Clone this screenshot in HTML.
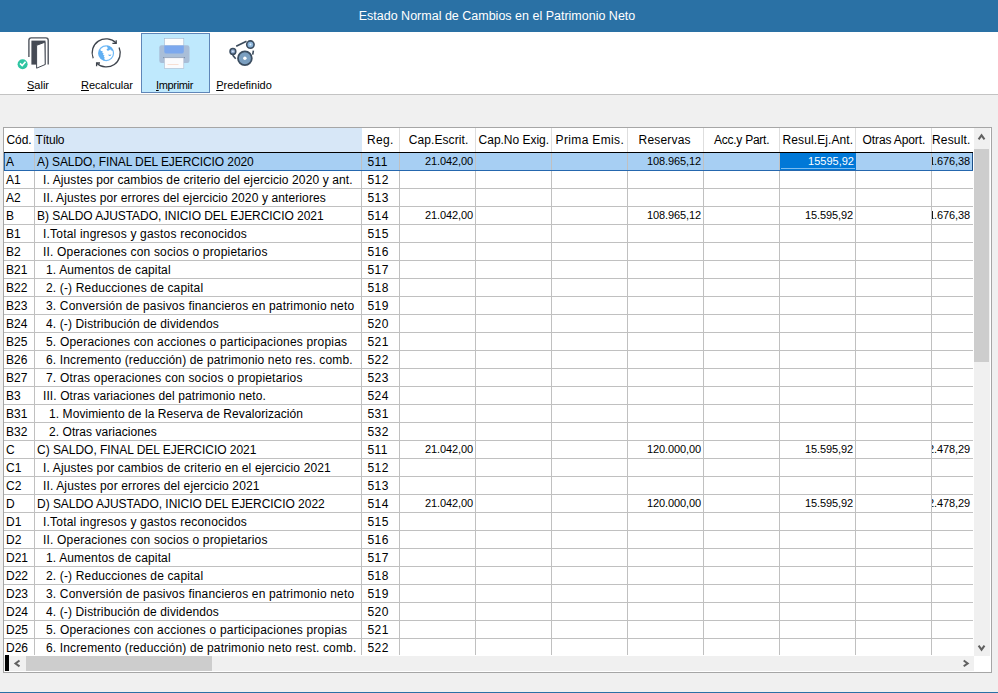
<!DOCTYPE html>
<html><head><meta charset="utf-8">
<style>
*{box-sizing:border-box;margin:0;padding:0}
html,body{width:998px;height:693px;overflow:hidden;background:#f0f0f0;font-family:"Liberation Sans",sans-serif;color:#000}
#title{position:absolute;left:0;top:0;width:998px;height:32px;background:#2a71a5;color:#fff;font-size:12.5px;line-height:33px;text-align:center;padding-right:4px}
#tb{position:absolute;left:0;top:32px;width:998px;height:63px;background:#fff;border-bottom:1px solid #c3c3c3}
.btn{position:absolute;top:1px;height:60px;font-size:11px;text-align:center}
.btn .lbl{position:absolute;left:0;right:0;top:46px;line-height:13px}
.btn svg{position:absolute;top:0;left:0}
#b3{background:#bfe9fd;border:1px solid #5f86b8}
#b3 .lbl{top:45px;letter-spacing:-0.35px;left:-2px}
u{text-decoration:underline}
#grid{position:absolute;left:3px;top:127px;width:989px;height:546px;border:1px solid #a6a6a6;background:#fff}
#inner{position:absolute;left:0px;top:0px;width:969px;height:527px;overflow:hidden;background:#fff}
#hdr{position:absolute;left:0;top:0;width:969px;height:25px;font-size:12px;line-height:25px;border-bottom:1px solid #000}
#hdr div{position:absolute;top:0;height:24px;text-align:left;white-space:nowrap;overflow:hidden}
#rows{position:absolute;left:0;top:25px;width:969px}
.row{position:relative;height:18px;width:969px;border-bottom:1px solid #c0c0c0}
.row.sel{background:#a7cff3;border-bottom:1px solid #2567ae;box-shadow:inset 1px 0 0 #2567ae,inset -1px 0 0 #1c4f88}
.c{position:absolute;top:0;height:17px;line-height:17px;font-size:12px;white-space:pre;overflow:hidden;border-right:1px solid #c0c0c0}
.n{font-size:11px;text-align:right;padding-right:2px;direction:rtl;letter-spacing:-0.1px}
.c0{left:0;width:31px;padding-left:2px;padding-top:1px}
.c1{left:31px;width:327px;padding-left:2px;padding-top:1px}
.c2{left:358px;width:38px;padding-left:5.5px;padding-top:1px;letter-spacing:0.4px}
.c3{left:396px;width:76px}
.c4{left:472px;width:76px}
.c5{left:548px;width:76px}
.c6{left:624px;width:76px}
.c7{left:700px;width:76px}
.c8{left:776px;width:76px}
.row.sel .c8{overflow:visible;border-right:none;width:77px;z-index:2}
.c9{left:852px;width:76px}
.c10{left:928px;width:41px;border-right:none;padding-right:3px}
.stem{position:absolute;left:0;top:4px;width:1px;height:8px;background:#1a1a1a}
.edit{position:absolute;left:0;top:0;width:76px;height:17px;background:#0078d7;color:#fff;text-align:right;padding-right:2px;direction:ltr;letter-spacing:0}
.edit::after{content:'';position:absolute;left:1px;right:1px;bottom:1px;height:1px;background:#7cbcf0}
#vs{position:absolute;left:970px;top:0;width:16px;height:528px;background:#f0f0f0}
#vs .th{position:absolute;left:0;top:21px;width:15px;height:213px;background:#cdcdcd}
#hs{position:absolute;left:0;top:528px;width:970px;height:15px;background:#f0f0f0}
#hs .th{position:absolute;left:22px;top:0;width:186px;height:15px;background:#cdcdcd}
#hs .blk{position:absolute;left:1px;top:-1px;width:4px;height:16px;background:#000}
#bot{position:absolute;left:0;top:692px;width:998px;height:1px;background:#2a71a5}
</style></head><body>
<div id="title">Estado Normal de Cambios en el Patrimonio Neto</div>
<div id="tb">
 <div class="btn" id="b1" style="left:4px;width:68px"><div class="lbl"><u>S</u>alir</div></div>
 <div class="btn" id="b2" style="left:73px;width:68px"><div class="lbl"><u>R</u>ecalcular</div></div>
 <div class="btn" id="b3" style="left:141px;width:69px"><div class="lbl"><u>I</u>mprimir</div></div>
 <div class="btn" id="b4" style="left:210px;width:68px"><div class="lbl"><u>P</u>redefinido</div></div>
</div>
<svg id="icons" width="998" height="693" viewBox="0 0 998 693" style="position:absolute;left:0;top:0;z-index:5;pointer-events:none">
 <!-- door -->
 <path d="M28.9 57 V40.2 Q28.9 37.9 31.2 37.9 H45.9 Q48.2 37.9 48.2 40.2 V64.6" fill="none" stroke="#50555e" stroke-width="1.4"/>
 <rect x="31.4" y="40.6" width="14.1" height="24" fill="#454a54"/>
 <path d="M44.9 42.2 L36.6 45.3 V68.2 L45.2 64.5 Z" fill="#fff" stroke="#454a54" stroke-width="1"/>
 <circle cx="22.6" cy="64.2" r="5" fill="#2fc5a2"/>
 <path d="M20 63.4 L22.2 65.5 L25.5 61.8" fill="none" stroke="#fff" stroke-width="1.6"/>
 <!-- recalc -->
 <g fill="none" stroke="#3e444d" stroke-width="1.3">
  <path d="M93.2 58.2 A14 14 0 0 1 116.1 43"/>
  <path d="M116.2 40.3 V43.4 H112.4"/>
  <path d="M119.1 47.4 A14 14 0 0 1 96.7 63.2"/>
  <path d="M96.6 66.2 V63 H100"/>
 </g>
 <defs><clipPath id="gc"><circle cx="106.1" cy="53.2" r="7.6"/></clipPath></defs>
 <circle cx="106.1" cy="53.2" r="7.4" fill="#fff" stroke="#6fb9f6" stroke-width="1.2"/>
 <g clip-path="url(#gc)" fill="#62b0f3">
  <path d="M97 49.3 L99.9 49.8 L101.3 51.1 L102.7 51.3 L102.3 52.8 L103.7 53.4 L103 54.8 L104.5 55.6 L103.7 57 L105 57.8 L104.1 58.8 L105.1 60.2 L104.6 62 H97 Z"/>
  <path d="M107.2 44 H115 V53 L113.4 52 L112.4 50.6 L111 50.6 L110.3 49.2 L109 50.4 L107.6 50.8 L106.5 49.6 L107.9 48.2 L107 46.8 Z"/>
  <path d="M108.2 54.2 Q109.8 55.6 111.4 54 L110.9 55.4 Q109.7 56.4 108.6 55.4 Z"/>
 </g>
 <!-- printer -->
 <rect x="164.3" y="38.3" width="19.5" height="8" fill="#fdfdfd" stroke="#9fb6cf" stroke-width="0.6"/>
 <rect x="159.3" y="45.3" width="30.2" height="17.6" rx="2.2" fill="#a9bed8"/>
 <path d="M164.3 45.5 H183.8 V51.4 Q183.8 53.6 181.6 53.6 H166.5 Q164.3 53.6 164.3 51.4 Z" fill="#7ca8ee"/>
 <rect x="163.2" y="57" width="21.8" height="1.2" fill="#7d8da6"/>
 <rect x="164.3" y="57.8" width="19.5" height="10.7" fill="#fbfbfd" stroke="#a9b9cf" stroke-width="0.6"/>
 <rect x="167.5" y="64" width="11" height="0.6" fill="#f5cdb8"/>
 <!-- predef -->
 <g stroke="#3b4a5b" stroke-width="1.6" fill="none">
  <path d="M236.2 46.3 L246.5 41.3"/>
  <path d="M232.6 54.9 L235.7 58.7"/>
  <path d="M253.4 50.6 L252.7 54.6"/>
 </g>
 <circle cx="244.9" cy="58.2" r="6.9" fill="#7b9fc0" stroke="#3b4d60" stroke-width="1.8"/>
 <circle cx="244.9" cy="58.2" r="1.7" fill="#fff"/>
 <circle cx="250.4" cy="44.6" r="3.7" fill="#8db5da" stroke="#3b4d60" stroke-width="1.6"/>
 <circle cx="250.4" cy="44.6" r="1" fill="#dff0ff"/>
 <circle cx="232.9" cy="51.4" r="2.9" fill="#8fa9cc" stroke="#3b4d60" stroke-width="1.5"/>
 <circle cx="232.9" cy="51.4" r="0.8" fill="#e4eefa"/>
 <g fill="none" stroke="#606060" stroke-width="2">
  <path d="M978.6 139.3 L981.55 135.3 L984.5 139.3"/>
  <path d="M978.6 645.7 L981.55 649.7 L984.5 645.7"/>
  <path d="M963.7 660.5 L967.7 663.4 L963.7 666.3"/>
  <path d="M19.5 660.5 L15.5 663.45 L19.5 666.4"/>
 </g>
</svg>
<div id="grid">
 <div id="inner">
  <div id="hdr">
   <div style="left:0px;width:30px;padding-left:2.50px;letter-spacing:-0.067px">Cód.</div>
   <div style="left:30px;width:328px;padding-left:1.60px;letter-spacing:-0.220px;background:#d7e7f7">Título</div>
   <div style="left:358px;width:38px;padding-left:5.00px;letter-spacing:0.367px;border-right:1px solid #dedede">Reg.</div>
   <div style="left:396px;width:76px;padding-left:8.70px;letter-spacing:0.090px;border-right:1px solid #dedede">Cap.Escrit.</div>
   <div style="left:472px;width:76px;padding-left:2.60px;letter-spacing:-0.018px;border-right:1px solid #dedede">Cap.No Exig.</div>
   <div style="left:548px;width:76px;padding-left:3.60px;letter-spacing:0.350px;border-right:1px solid #dedede">Prima Emis.</div>
   <div style="left:624px;width:76px;padding-left:10.60px;letter-spacing:0.186px;border-right:1px solid #dedede">Reservas</div>
   <div style="left:700px;width:76px;padding-left:10.00px;letter-spacing:-0.250px;border-right:1px solid #dedede">Acc.y Part.</div>
   <div style="left:776px;width:76px;padding-left:2.60px;letter-spacing:0.092px;border-right:1px solid #dedede">Resul.Ej.Ant.</div>
   <div style="left:852px;width:76px;padding-left:6.60px;letter-spacing:-0.127px;border-right:1px solid #dedede">Otras Aport.</div>
   <div style="left:928px;width:41px;padding-left:-0.20px;letter-spacing:0.167px">Result.</div>
  </div>
  <div id="rows">
<div class="row sel"><div class="c c0">A</div><div class="c c1" style="padding-left:2px;letter-spacing:-0.094px">A) SALDO, FINAL DEL EJERCICIO 2020</div><div class="c c2">511</div><div class="c n c3">21.042,00</div><div class="c n c4"></div><div class="c n c5"></div><div class="c n c6">108.965,12</div><div class="c n c7"></div><div class="c n c8"><div class="edit">15595,92</div></div><div class="c n c9"></div><div class="c n c10">1.676,38<i class="stem"></i></div></div>
<div class="row"><div class="c c0">A1</div><div class="c c1" style="padding-left:8px;letter-spacing:0.115px">I. Ajustes por cambios de criterio del ejercicio 2020 y ant.</div><div class="c c2">512</div><div class="c n c3"></div><div class="c n c4"></div><div class="c n c5"></div><div class="c n c6"></div><div class="c n c7"></div><div class="c n c8"></div><div class="c n c9"></div><div class="c n c10"></div></div>
<div class="row"><div class="c c0">A2</div><div class="c c1" style="padding-left:8px;letter-spacing:0.111px">II. Ajustes por errores del ejercicio 2020 y anteriores</div><div class="c c2">513</div><div class="c n c3"></div><div class="c n c4"></div><div class="c n c5"></div><div class="c n c6"></div><div class="c n c7"></div><div class="c n c8"></div><div class="c n c9"></div><div class="c n c10"></div></div>
<div class="row"><div class="c c0">B</div><div class="c c1" style="padding-left:2px;letter-spacing:-0.049px">B) SALDO AJUSTADO, INICIO DEL EJERCICIO 2021</div><div class="c c2">514</div><div class="c n c3">21.042,00</div><div class="c n c4"></div><div class="c n c5"></div><div class="c n c6">108.965,12</div><div class="c n c7"></div><div class="c n c8">15.595,92</div><div class="c n c9"></div><div class="c n c10">1.676,38<i class="stem"></i></div></div>
<div class="row"><div class="c c0">B1</div><div class="c c1" style="padding-left:8px;letter-spacing:0.197px">I.Total ingresos y gastos reconocidos</div><div class="c c2">515</div><div class="c n c3"></div><div class="c n c4"></div><div class="c n c5"></div><div class="c n c6"></div><div class="c n c7"></div><div class="c n c8"></div><div class="c n c9"></div><div class="c n c10"></div></div>
<div class="row"><div class="c c0">B2</div><div class="c c1" style="padding-left:8px;letter-spacing:0.175px">II. Operaciones con socios o propietarios</div><div class="c c2">516</div><div class="c n c3"></div><div class="c n c4"></div><div class="c n c5"></div><div class="c n c6"></div><div class="c n c7"></div><div class="c n c8"></div><div class="c n c9"></div><div class="c n c10"></div></div>
<div class="row"><div class="c c0">B21</div><div class="c c1" style="padding-left:11px;letter-spacing:0.152px">1. Aumentos de capital</div><div class="c c2">517</div><div class="c n c3"></div><div class="c n c4"></div><div class="c n c5"></div><div class="c n c6"></div><div class="c n c7"></div><div class="c n c8"></div><div class="c n c9"></div><div class="c n c10"></div></div>
<div class="row"><div class="c c0">B22</div><div class="c c1" style="padding-left:11px;letter-spacing:0.154px">2. (-) Reducciones de capital</div><div class="c c2">518</div><div class="c n c3"></div><div class="c n c4"></div><div class="c n c5"></div><div class="c n c6"></div><div class="c n c7"></div><div class="c n c8"></div><div class="c n c9"></div><div class="c n c10"></div></div>
<div class="row"><div class="c c0">B23</div><div class="c c1" style="padding-left:11px;letter-spacing:0.172px">3. Conversión de pasivos financieros en patrimonio neto</div><div class="c c2">519</div><div class="c n c3"></div><div class="c n c4"></div><div class="c n c5"></div><div class="c n c6"></div><div class="c n c7"></div><div class="c n c8"></div><div class="c n c9"></div><div class="c n c10"></div></div>
<div class="row"><div class="c c0">B24</div><div class="c c1" style="padding-left:11px;letter-spacing:0.128px">4. (-) Distribución de dividendos</div><div class="c c2">520</div><div class="c n c3"></div><div class="c n c4"></div><div class="c n c5"></div><div class="c n c6"></div><div class="c n c7"></div><div class="c n c8"></div><div class="c n c9"></div><div class="c n c10"></div></div>
<div class="row"><div class="c c0">B25</div><div class="c c1" style="padding-left:11px;letter-spacing:0.196px">5. Operaciones con acciones o participaciones propias</div><div class="c c2">521</div><div class="c n c3"></div><div class="c n c4"></div><div class="c n c5"></div><div class="c n c6"></div><div class="c n c7"></div><div class="c n c8"></div><div class="c n c9"></div><div class="c n c10"></div></div>
<div class="row"><div class="c c0">B26</div><div class="c c1" style="padding-left:11px;letter-spacing:0.144px">6. Incremento (reducción) de patrimonio neto res. comb.</div><div class="c c2">522</div><div class="c n c3"></div><div class="c n c4"></div><div class="c n c5"></div><div class="c n c6"></div><div class="c n c7"></div><div class="c n c8"></div><div class="c n c9"></div><div class="c n c10"></div></div>
<div class="row"><div class="c c0">B27</div><div class="c c1" style="padding-left:11px;letter-spacing:0.200px">7. Otras operaciones con socios o propietarios</div><div class="c c2">523</div><div class="c n c3"></div><div class="c n c4"></div><div class="c n c5"></div><div class="c n c6"></div><div class="c n c7"></div><div class="c n c8"></div><div class="c n c9"></div><div class="c n c10"></div></div>
<div class="row"><div class="c c0">B3</div><div class="c c1" style="padding-left:8px;letter-spacing:0.095px">III. Otras variaciones del patrimonio neto.</div><div class="c c2">524</div><div class="c n c3"></div><div class="c n c4"></div><div class="c n c5"></div><div class="c n c6"></div><div class="c n c7"></div><div class="c n c8"></div><div class="c n c9"></div><div class="c n c10"></div></div>
<div class="row"><div class="c c0">B31</div><div class="c c1" style="padding-left:14px;letter-spacing:0.073px">1. Movimiento de la Reserva de Revalorización</div><div class="c c2">531</div><div class="c n c3"></div><div class="c n c4"></div><div class="c n c5"></div><div class="c n c6"></div><div class="c n c7"></div><div class="c n c8"></div><div class="c n c9"></div><div class="c n c10"></div></div>
<div class="row"><div class="c c0">B32</div><div class="c c1" style="padding-left:14px;letter-spacing:0.053px">2. Otras variaciones</div><div class="c c2">532</div><div class="c n c3"></div><div class="c n c4"></div><div class="c n c5"></div><div class="c n c6"></div><div class="c n c7"></div><div class="c n c8"></div><div class="c n c9"></div><div class="c n c10"></div></div>
<div class="row"><div class="c c0">C</div><div class="c c1" style="padding-left:2px;letter-spacing:-0.033px">C) SALDO, FINAL DEL EJERCICIO 2021</div><div class="c c2">511</div><div class="c n c3">21.042,00</div><div class="c n c4"></div><div class="c n c5"></div><div class="c n c6">120.000,00</div><div class="c n c7"></div><div class="c n c8">15.595,92</div><div class="c n c9"></div><div class="c n c10">2.478,29</div></div>
<div class="row"><div class="c c0">C1</div><div class="c c1" style="padding-left:8px;letter-spacing:0.141px">I. Ajustes por cambios de criterio en el ejercicio 2021</div><div class="c c2">512</div><div class="c n c3"></div><div class="c n c4"></div><div class="c n c5"></div><div class="c n c6"></div><div class="c n c7"></div><div class="c n c8"></div><div class="c n c9"></div><div class="c n c10"></div></div>
<div class="row"><div class="c c0">C2</div><div class="c c1" style="padding-left:8px;letter-spacing:0.139px">II. Ajustes por errores del ejercicio 2021</div><div class="c c2">513</div><div class="c n c3"></div><div class="c n c4"></div><div class="c n c5"></div><div class="c n c6"></div><div class="c n c7"></div><div class="c n c8"></div><div class="c n c9"></div><div class="c n c10"></div></div>
<div class="row"><div class="c c0">D</div><div class="c c1" style="padding-left:2px;letter-spacing:-0.040px">D) SALDO AJUSTADO, INICIO DEL EJERCICIO 2022</div><div class="c c2">514</div><div class="c n c3">21.042,00</div><div class="c n c4"></div><div class="c n c5"></div><div class="c n c6">120.000,00</div><div class="c n c7"></div><div class="c n c8">15.595,92</div><div class="c n c9"></div><div class="c n c10">2.478,29</div></div>
<div class="row"><div class="c c0">D1</div><div class="c c1" style="padding-left:8px;letter-spacing:0.197px">I.Total ingresos y gastos reconocidos</div><div class="c c2">515</div><div class="c n c3"></div><div class="c n c4"></div><div class="c n c5"></div><div class="c n c6"></div><div class="c n c7"></div><div class="c n c8"></div><div class="c n c9"></div><div class="c n c10"></div></div>
<div class="row"><div class="c c0">D2</div><div class="c c1" style="padding-left:8px;letter-spacing:0.175px">II. Operaciones con socios o propietarios</div><div class="c c2">516</div><div class="c n c3"></div><div class="c n c4"></div><div class="c n c5"></div><div class="c n c6"></div><div class="c n c7"></div><div class="c n c8"></div><div class="c n c9"></div><div class="c n c10"></div></div>
<div class="row"><div class="c c0">D21</div><div class="c c1" style="padding-left:11px;letter-spacing:0.152px">1. Aumentos de capital</div><div class="c c2">517</div><div class="c n c3"></div><div class="c n c4"></div><div class="c n c5"></div><div class="c n c6"></div><div class="c n c7"></div><div class="c n c8"></div><div class="c n c9"></div><div class="c n c10"></div></div>
<div class="row"><div class="c c0">D22</div><div class="c c1" style="padding-left:11px;letter-spacing:0.154px">2. (-) Reducciones de capital</div><div class="c c2">518</div><div class="c n c3"></div><div class="c n c4"></div><div class="c n c5"></div><div class="c n c6"></div><div class="c n c7"></div><div class="c n c8"></div><div class="c n c9"></div><div class="c n c10"></div></div>
<div class="row"><div class="c c0">D23</div><div class="c c1" style="padding-left:11px;letter-spacing:0.172px">3. Conversión de pasivos financieros en patrimonio neto</div><div class="c c2">519</div><div class="c n c3"></div><div class="c n c4"></div><div class="c n c5"></div><div class="c n c6"></div><div class="c n c7"></div><div class="c n c8"></div><div class="c n c9"></div><div class="c n c10"></div></div>
<div class="row"><div class="c c0">D24</div><div class="c c1" style="padding-left:11px;letter-spacing:0.128px">4. (-) Distribución de dividendos</div><div class="c c2">520</div><div class="c n c3"></div><div class="c n c4"></div><div class="c n c5"></div><div class="c n c6"></div><div class="c n c7"></div><div class="c n c8"></div><div class="c n c9"></div><div class="c n c10"></div></div>
<div class="row"><div class="c c0">D25</div><div class="c c1" style="padding-left:11px;letter-spacing:0.196px">5. Operaciones con acciones o participaciones propias</div><div class="c c2">521</div><div class="c n c3"></div><div class="c n c4"></div><div class="c n c5"></div><div class="c n c6"></div><div class="c n c7"></div><div class="c n c8"></div><div class="c n c9"></div><div class="c n c10"></div></div>
<div class="row"><div class="c c0">D26</div><div class="c c1" style="padding-left:11px;letter-spacing:0.147px">6. Incremento (reducción) de patrimonio neto rest. comb.</div><div class="c c2">522</div><div class="c n c3"></div><div class="c n c4"></div><div class="c n c5"></div><div class="c n c6"></div><div class="c n c7"></div><div class="c n c8"></div><div class="c n c9"></div><div class="c n c10"></div></div>
  </div>
 </div>
 <div id="vs"><div class="th"></div></div>
 <div id="hs"><div class="blk"></div><div class="th"></div></div>
</div>
<div id="bot"></div>
</body></html>
